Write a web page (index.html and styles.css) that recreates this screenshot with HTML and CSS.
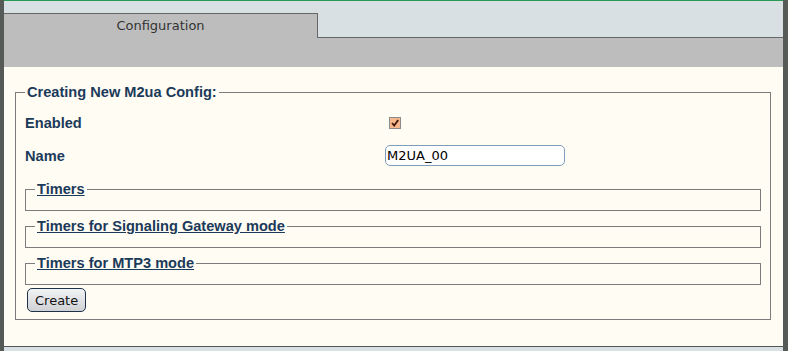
FILE: index.html
```html
<!DOCTYPE html>
<html lang="en">
<head>
    <meta charset="UTF-8">
    <title>Configuration</title>
    <link rel="stylesheet" href="styles.css">
</head>
<body>
<div class="page">
    <div class="tabs">
        <div class="tab">Configuration</div>
    </div>
    <div class="band"></div>

    <div class="content">
        <form id="m2uaForm">
            <fieldset class="box">
                <legend>Creating New M2ua Config:</legend>

                <div class="rows">
                    <div class="row">
                        <label for="enabled">Enabled</label>
                        <input type="checkbox" id="enabled" name="enabled" checked>
                    </div>
                    <div class="row">
                        <label for="name">Name</label>
                        <input type="text" id="name" name="name" value="M2UA_00">
                    </div>
                </div>

                <fieldset class="sub"><legend><a href="#">Timers</a></legend></fieldset>
                <fieldset class="sub"><legend><a href="#">Timers for Signaling Gateway mode</a></legend></fieldset>
                <fieldset class="sub"><legend><a href="#">Timers for MTP3 mode</a></legend></fieldset>

                <button type="button" class="create">Create</button>
            </fieldset>
        </form>
    </div>
</div>
</body>
</html>
```

FILE: styles.css
```css
html, body {
    margin: 0;
    height: 100%;
}
body {
    background: #565a56;
    padding: 0 5px 0 4px;
    box-sizing: border-box;
    overflow: hidden;
}
.page {
    background: #d9e0e3;
    border-top: 1px solid #2a9a52;
    height: 350px;
}
.tabs {
    display: flex;
    padding-top: 12px;
    border-bottom: 1px solid #666;
}
.tab {
    width: 313px;
    height: 24px;
    margin-bottom: -1px;
    background: #bdbdbe;
    border-top: 1px solid #666;
    border-right: 1px solid #666;
    font: 13px/24px "DejaVu Sans", sans-serif;
    color: #333;
    text-align: center;
}
.band {
    height: 29px;
    background: #bdbdbe;
}
.content {
    background: #fffcf3;
    height: 262px;
    padding-top: 17px;
    border-bottom: 1px solid #555;
}
fieldset {
    border: 1px solid #7c7c7c;
    min-inline-size: auto;
}
legend {
    padding: 0 2px;
    font: bold 14.6px/16px "Liberation Sans", Arial, sans-serif;
    color: #1b3a5a;
}
.box {
    margin: 0 12px 0 11px;
    padding: 0 9px 7px 9px;
}
.rows {
    padding: 6px 0 1px;
}
.row {
    display: grid;
    grid-template-columns: 360px auto;
    align-items: center;
    height: 33px;
}
.row label {
    font: bold 14.6px "Liberation Sans", Arial, sans-serif;
    color: #1b3a5a;
}
.row input[type="checkbox"] {
    appearance: none;
    width: 12px;
    height: 12px;
    margin: 0 0 0 4px;
    border: 1px solid #8a8a8a;
    background-color: #f6b88c;
    background-image: url("data:image/svg+xml,%3Csvg xmlns='http://www.w3.org/2000/svg' viewBox='0 0 10 10'%3E%3Cpath d='M2 5l2.2 2.6L8.2 2' fill='none' stroke='%23401808' stroke-width='1.8'/%3E%3C/svg%3E");
    background-size: 10px 10px;
    background-position: center;
    background-repeat: no-repeat;
}
.row input[type="text"] {
    box-sizing: border-box;
    width: 180px;
    height: 21px;
    padding: 0 1px;
    border: 1px solid #7f9db9;
    border-radius: 5px;
    background: #fff;
    font: 13px "DejaVu Sans", sans-serif;
    color: #000;
}
.sub {
    margin: 7px 0 0;
    padding: 0 9px 13px 9px;
}
.sub:first-of-type {
    margin-top: 8px;
}
.sub a {
    color: #1b3a5a;
    text-decoration: underline;
}
.create {
    display: block;
    margin: 3px 0 0 2px;
    height: 24px;
    padding: 0 7px;
    border: 1px solid #1d3149;
    border-radius: 5px;
    background: linear-gradient(#f2f3f5, #cfd1d5);
    font: 13px "DejaVu Sans", sans-serif;
    color: #111;
}
```
